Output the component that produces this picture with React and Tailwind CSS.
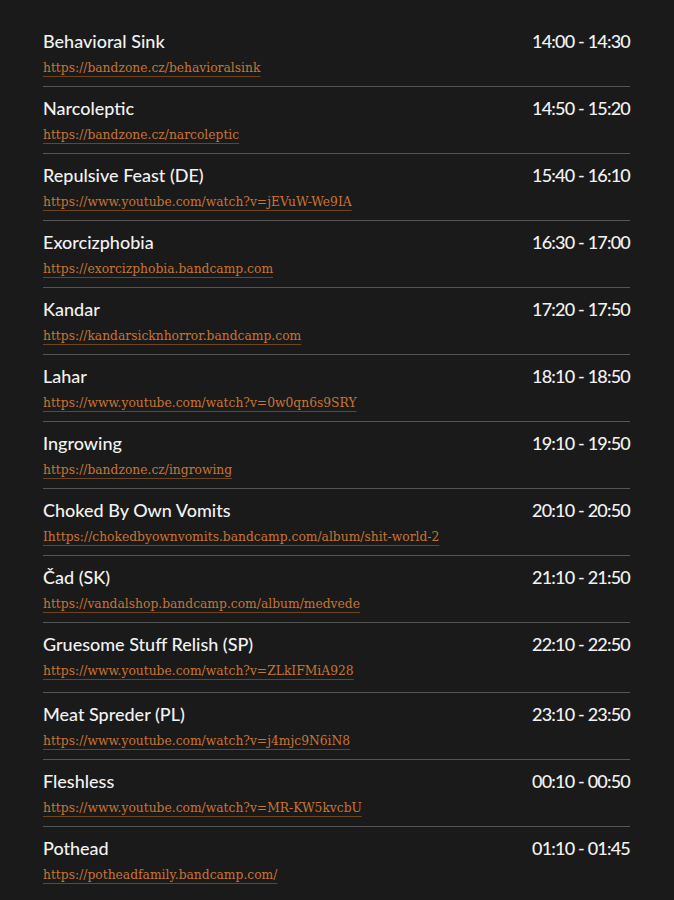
import React from "react";

const lineup = [
  { band: "Behavioral Sink", time: "14:00 - 14:30", url: "https://bandzone.cz/behavioralsink" },
  { band: "Narcoleptic", time: "14:50 - 15:20", url: "https://bandzone.cz/narcoleptic" },
  { band: "Repulsive Feast (DE)", time: "15:40 - 16:10", url: "https://www.youtube.com/watch?v=jEVuW-We9IA" },
  { band: "Exorcizphobia", time: "16:30 - 17:00", url: "https://exorcizphobia.bandcamp.com" },
  { band: "Kandar", time: "17:20 - 17:50", url: "https://kandarsicknhorror.bandcamp.com" },
  { band: "Lahar", time: "18:10 - 18:50", url: "https://www.youtube.com/watch?v=0w0qn6s9SRY" },
  { band: "Ingrowing", time: "19:10 - 19:50", url: "https://bandzone.cz/ingrowing" },
  { band: "Choked By Own Vomits", time: "20:10 - 20:50", url: "Ihttps://chokedbyownvomits.bandcamp.com/album/shit-world-2" },
  { band: "Čad (SK)", time: "21:10 - 21:50", url: "https://vandalshop.bandcamp.com/album/medvede" },
  { band: "Gruesome Stuff Relish (SP)", time: "22:10 - 22:50", url: "https://www.youtube.com/watch?v=ZLkIFMiA928", tall: true },
  { band: "Meat Spreder (PL)", time: "23:10 - 23:50", url: "https://www.youtube.com/watch?v=j4mjc9N6iN8" },
  { band: "Fleshless", time: "00:10 - 00:50", url: "https://www.youtube.com/watch?v=MR-KW5kvcbU" },
  { band: "Pothead", time: "01:10 - 01:45", url: "https://potheadfamily.bandcamp.com/" },
];

export default function App() {
  return (
    <div className="min-h-[900px] bg-[#1a1a1a] px-[43px] pt-[20px] pb-[20px]">
      <ul className="w-[587px]">
        {lineup.map((item, i) => (
          <li
            key={item.band}
            className={`pt-[9px] ${item.tall ? "pb-[11px]" : "pb-[8px]"} ${
              i < lineup.length - 1 ? "border-b border-[#555555]" : ""
            }`}
          >
            <div className="flex items-start justify-between text-[#f2f2f2] font-['Lato',sans-serif] font-medium text-[18px] leading-[24px]">
              <span>{item.band}</span>
              <span className="tracking-[-0.8px]">{item.time}</span>
            </div>
            <a
              href="#"
              className="mt-[5px] inline-block font-['DejaVu_Serif',serif] text-[12.3px] leading-[20px] text-[#c87532] underline decoration-[#6b4420] underline-offset-[4px]"
            >
              {item.url}
            </a>
          </li>
        ))}
      </ul>
    </div>
  );
}
